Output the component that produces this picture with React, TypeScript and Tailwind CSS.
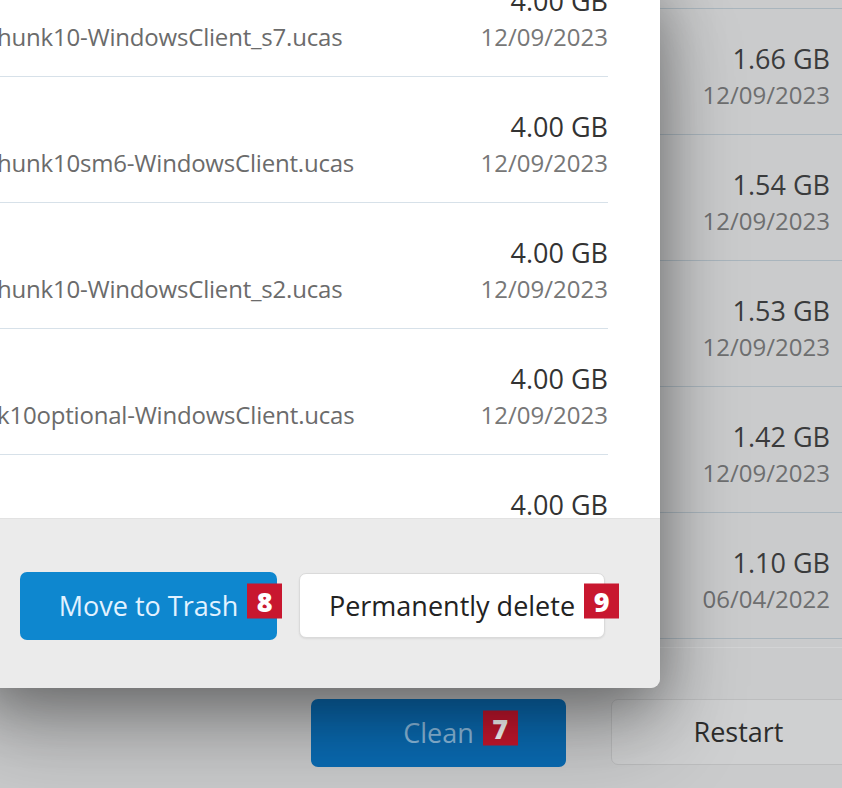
import React from 'react';

const files = [
  { name: 'hunk10-WindowsClient_s7.ucas', size: '4.00 GB', date: '12/09/2023' },
  { name: 'hunk10sm6-WindowsClient.ucas', size: '4.00 GB', date: '12/09/2023' },
  { name: 'hunk10-WindowsClient_s2.ucas', size: '4.00 GB', date: '12/09/2023' },
  { name: 'k10optional-WindowsClient.ucas', size: '4.00 GB', date: '12/09/2023' },
  { name: 'hunk10-WindowsClient_s1.ucas', size: '4.00 GB', date: '12/09/2023' },
];

const apps = [
  { size: '1.66 GB', date: '12/09/2023' },
  { size: '1.54 GB', date: '12/09/2023' },
  { size: '1.53 GB', date: '12/09/2023' },
  { size: '1.42 GB', date: '12/09/2023' },
  { size: '1.10 GB', date: '06/04/2022' },
];

const Badge: React.FC<{ n: string }> = ({ n }) => (
  <span className="absolute left-full top-1/2 ml-[9px] mt-[-5px] -translate-y-1/2 w-[35px] h-[35px] bg-[#c8172f] text-white font-extrabold text-[27px] leading-none flex items-center justify-center">
    {n}
  </span>
);

export default function App() {
  return (
    <div
      className="relative w-[842px] h-[788px] overflow-hidden bg-[#cacbcc]"
      style={{ fontFamily: '"Open Sans", "Noto Sans", sans-serif' }}
    >
      {/* app behind the dialog */}
      <div className="flex flex-col">
        <div className="h-[9px] border-b border-[#a9b5bd]" />
        {apps.map((a, i) => (
          <div key={i} className="h-[126px] border-b border-[#a9b5bd] flex items-end justify-end pr-[12px] pb-[23px]">
            <div className="flex flex-col items-end">
              <div className="text-[27px] leading-[36px] mb-[2px] text-[#3a3b3c]">{a.size}</div>
              <div className="text-[24px] leading-[32px] text-[#6e6f70]">{a.date}</div>
            </div>
          </div>
        ))}
        <div className="h-[9px] border-b border-[#d3d4d5]" />
        <div className="flex gap-[45px] pl-[311px] pt-[51px]">
          <div className="relative w-[255px] h-[68px] shrink-0 rounded-[7px] bg-[#0a6cb4] flex items-center justify-center">
            <span className="relative text-[27px] text-[#8dbde0] leading-[36px]">
              Clean
              <Badge n="7" />
            </span>
          </div>
          <div className="w-[255px] h-[66px] shrink-0 rounded-[7px] bg-[#cfd0d1] border border-[#bcbdbe] flex items-center justify-center">
            <span className="text-[27px] text-[#2c2c2c] leading-[36px]">Restart</span>
          </div>
        </div>
      </div>

      {/* dialog */}
      <div className="absolute left-[-20px] top-[-20px] w-[680px] h-[708px] rounded-[9px] overflow-hidden flex flex-col shadow-[0_14px_60px_rgba(0,0,0,0.38),0_50px_90px_rgba(0,0,0,0.22)]">
        <div className="h-[538px] bg-white overflow-hidden pl-[20px] pr-[52px]">
          <div className="mt-[-29px]">
            {files.map((f, i) => (
              <div key={i} className="h-[126px] border-b border-[#d7e1e9] flex items-end justify-between pb-[23px]">
                <div className="-ml-[3px] text-[24px] tracking-[-0.2px] leading-[32px] text-[#6b6b6b] whitespace-nowrap">{f.name}</div>
                <div className="flex flex-col items-end">
                  <div className="text-[27px] leading-[36px] mb-[2px] text-[#333333]">{f.size}</div>
                  <div className="text-[24px] leading-[32px] text-[#777777]">{f.date}</div>
                </div>
              </div>
            ))}
          </div>
        </div>
        <div className="flex-1 bg-[#ebebeb] border-t border-[#e2e2e2] flex items-center gap-[22px] pl-[40px] pt-[4px]">
          <div className="w-[257px] h-[68px] rounded-[7px] bg-[#0e87cf] flex items-center justify-center">
            <span className="relative text-[27px] text-[#e2f2ff] leading-[36px]">
              Move to Trash
              <Badge n="8" />
            </span>
          </div>
          <div className="w-[306px] h-[65px] rounded-[7px] bg-white border border-[#dadada] shadow-[0_1px_2px_rgba(0,0,0,0.08)] flex items-center justify-center">
            <span className="relative text-[27px] text-[#222222] leading-[36px]">
              Permanently delete
              <Badge n="9" />
            </span>
          </div>
        </div>
      </div>
    </div>
  );
}
